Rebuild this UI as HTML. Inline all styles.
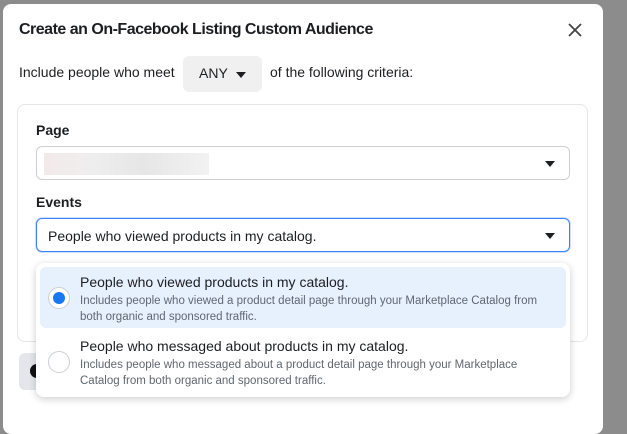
<!DOCTYPE html>
<html><head><style>
body{margin:0;width:627px;height:414px;background:#8c8c8c;font-family:"Liberation Sans",sans-serif;position:relative;overflow:hidden;color:#1c1e21}
.m{position:absolute;left:3px;top:4px;width:600px;height:430px;background:#fff;border-radius:8px}
.a{position:absolute;white-space:nowrap}
.sel{position:absolute;left:36px;width:532px;height:32px;border:1px solid #ccd0d5;border-radius:6px;background:#fff}
.tri{position:absolute;right:14px;top:14px;width:0;height:0;border-left:5px solid transparent;border-right:5px solid transparent;border-top:6px solid #1c1e21}
.radio{position:absolute;left:48px;width:20px;height:20px;border:1px solid #ccd0d5;border-radius:50%;background:#fff}
.d{font-size:11.5px;line-height:16px;color:#606770;letter-spacing:0}
</style></head><body>
<div class="m"></div>
<div class="a" style="left:19px;top:21px;font-size:16px;font-weight:bold;letter-spacing:-0.5px">Create an On-Facebook Listing Custom Audience</div>
<svg class="a" style="left:568px;top:23px" width="14" height="14"><path d="M1 1L13 13M13 1L1 13" stroke="#444" stroke-width="1.8"/></svg>
<div class="a" style="left:19px;top:64px;font-size:14px;letter-spacing:0">Include people who meet</div>
<div class="a" style="left:183px;top:56px;width:79px;height:36px;background:#f0f0f0;border-radius:6px"><span class="a" style="left:16px;top:9px;font-size:14px">ANY</span><div class="tri" style="top:16px;right:16px"></div></div>
<div class="a" style="left:270px;top:64px;font-size:14px;letter-spacing:0">of the following criteria:</div>
<div class="a" style="left:17px;top:104px;width:569px;height:236px;border:1px solid #e6e6e6;border-radius:8px"></div>
<div class="a" style="left:36px;top:122px;font-size:14px;font-weight:bold">Page</div>
<div class="sel" style="top:146px"><div class="a" style="left:7px;top:6px;width:165px;height:22px;background:linear-gradient(90deg,#f3eaea,#eee 30%,#e6e6e6 60%,#f2f2f2)"></div><div class="tri"></div></div>
<div class="a" style="left:36px;top:194px;font-size:14px;font-weight:bold">Events</div>
<div class="sel" style="top:218px;border:1px solid #3b82f6;box-shadow:0 0 0 1px #cfe0fb"><span class="a" style="left:11px;top:9px;font-size:14px;letter-spacing:0">People who viewed products in my catalog.</span><div class="tri"></div></div>
<div class="a" style="left:19px;top:353px;width:40px;height:37px;background:#e4e6eb;border-radius:6px"><div class="a" style="left:11px;top:11px;width:14px;height:14px;border-radius:50%;background:#111"></div></div>
<div class="a" style="left:36px;top:263px;width:534px;height:134px;background:#fff;border-radius:8px;box-shadow:0 2px 8px rgba(0,0,0,.2)"></div>
<div class="a" style="left:40px;top:267px;width:526px;height:61px;background:#e7f0fd;border-radius:6px"></div>
<div class="radio" style="top:287px"><div class="a" style="left:4px;top:4px;width:12px;height:12px;border-radius:50%;background:#1877f2"></div></div>
<div class="a" style="left:80px;top:274px;font-size:14px;letter-spacing:0">People who viewed products in my catalog.</div>
<div class="a d" style="left:80px;top:293px">Includes people who viewed a product detail page through your Marketplace Catalog from<br>both organic and sponsored traffic.</div>
<div class="radio" style="top:351px"></div>
<div class="a" style="left:80px;top:338px;font-size:14px;letter-spacing:0">People who messaged about products in my catalog.</div>
<div class="a d" style="left:80px;top:357px">Includes people who messaged about a product detail page through your Marketplace<br>Catalog from both organic and sponsored traffic.</div>
</body></html>
